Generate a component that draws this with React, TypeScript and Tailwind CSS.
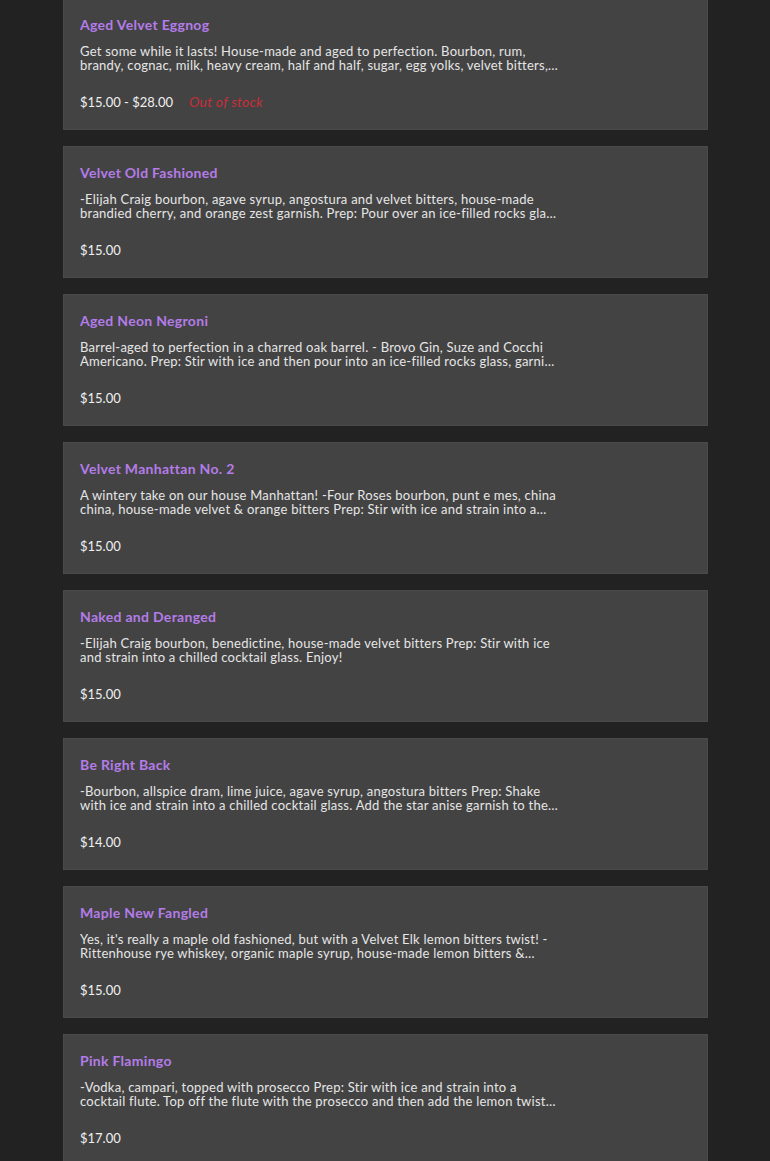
import React from "react";

type Item = { name: string; desc: string; price: string; oos?: boolean };

const items: Item[] = [
  {
    name: "Aged Velvet Eggnog",
    desc: "Get some while it lasts! House-made and aged to perfection. Bourbon, rum, brandy, cognac, milk, heavy cream, half and half, sugar, egg yolks, velvet bitters, nutmeg and cinnamon.",
    price: "$15.00 - $28.00",
    oos: true,
  },
  {
    name: "Velvet Old Fashioned",
    desc: "-Elijah Craig bourbon, agave syrup, angostura and velvet bitters, house-made brandied cherry, and orange zest garnish. Prep: Pour over an ice-filled rocks glass and stir.",
    price: "$15.00",
  },
  {
    name: "Aged Neon Negroni",
    desc: "Barrel-aged to perfection in a charred oak barrel. - Brovo Gin, Suze and Cocchi Americano. Prep: Stir with ice and then pour into an ice-filled rocks glass, garnish with orange.",
    price: "$15.00",
  },
  {
    name: "Velvet Manhattan No. 2",
    desc: "A wintery take on our house Manhattan! -Four Roses bourbon, punt e mes, china china, house-made velvet & orange bitters Prep: Stir with ice and strain into a chilled cocktail glass.",
    price: "$15.00",
  },
  {
    name: "Naked and Deranged",
    desc: "-Elijah Craig bourbon, benedictine, house-made velvet bitters Prep: Stir with ice and strain into a chilled cocktail glass. Enjoy!",
    price: "$15.00",
  },
  {
    name: "Be Right Back",
    desc: "-Bourbon, allspice dram, lime juice, agave syrup, angostura bitters Prep: Shake with ice and strain into a chilled cocktail glass. Add the star anise garnish to the top.",
    price: "$14.00",
  },
  {
    name: "Maple New Fangled",
    desc: "Yes, it's really a maple old fashioned, but with a Velvet Elk lemon bitters twist! -Rittenhouse rye whiskey, organic maple syrup, house-made lemon bitters & orange bitters.",
    price: "$15.00",
  },
  {
    name: "Pink Flamingo",
    desc: "-Vodka, campari, topped with prosecco Prep: Stir with ice and strain into a cocktail flute. Top off the flute with the prosecco and then add the lemon twist garnish.",
    price: "$17.00",
  },
];

export default function App() {
  return (
    <div
      className="min-h-[1161px] w-full bg-[#222222] overflow-hidden"
      style={{ fontFamily: "Lato, 'Noto Sans', sans-serif" }}
    >
      <div className="ml-[63px] w-[645px] -mt-[2px] flex flex-col gap-4">
        {items.map((it) => (
          <div
            key={it.name}
            className="h-[132px] bg-[#434343] border border-[#4a4a4a] px-4 pt-4"
          >
            <div className="text-[14px] leading-[20px] font-bold tracking-[0.3px] text-[#b47ce8]">
              {it.name}
            </div>
            <p className="mt-[9px] w-[478px] text-[13px] leading-[14px] tracking-[0.24px] text-[#e6e6e6] line-clamp-2">
              {it.desc}
            </p>
            <div className="mt-[20px] flex items-center gap-4 text-[13px] leading-[20px]">
              <span className="text-[#f0f0f0]">{it.price}</span>
              {it.oos && (
                <span className="italic text-[14px] tracking-[0.2px] text-[#c62f3a]">Out of stock</span>
              )}
            </div>
          </div>
        ))}
      </div>
    </div>
  );
}
